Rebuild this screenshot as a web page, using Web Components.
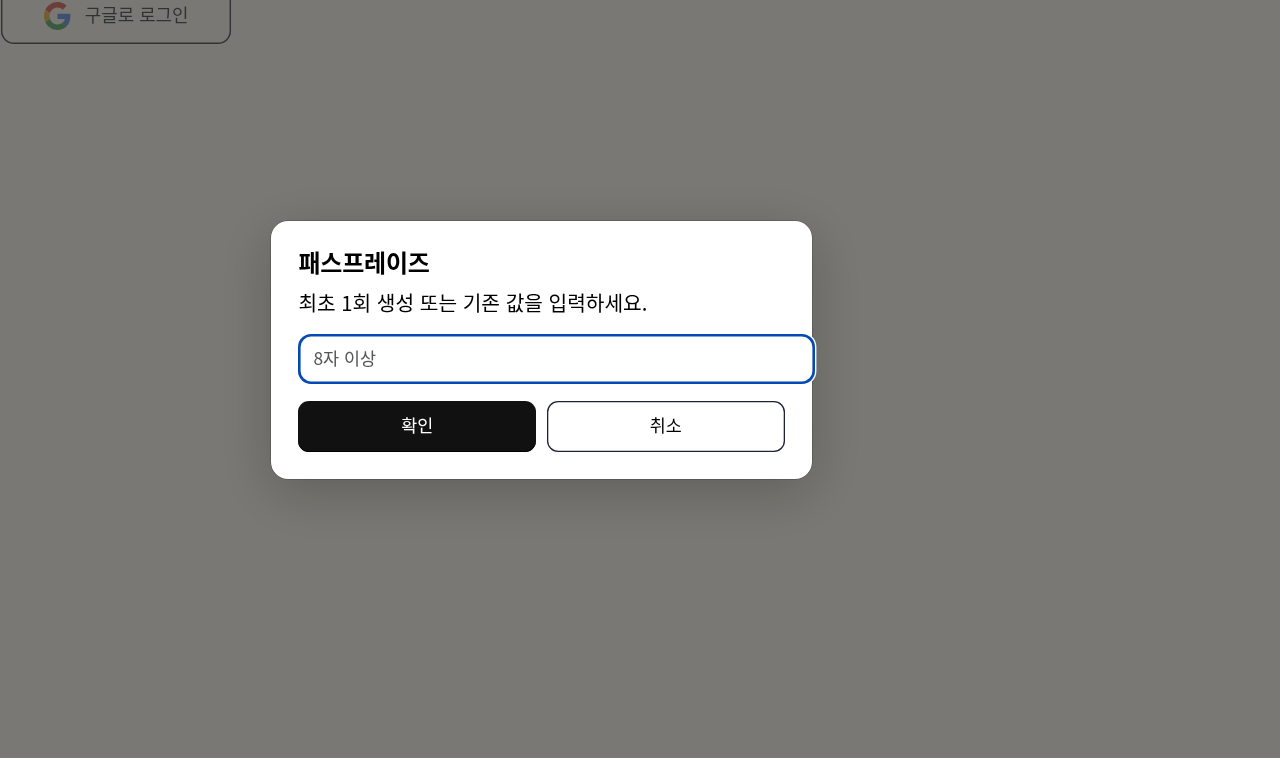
<!DOCTYPE html>
<html lang="ko">
<head>
<meta charset="utf-8">
<title>패스프레이즈</title>
<style>
  body {
    margin: 0;
    height: 100vh;
    overflow: hidden;
    background: #f4f1e8;
    color: #000;
    font-family: "Noto Sans CJK KR", sans-serif;
  }
</style>
</head>
<body>
<google-login disabled>구글로 로그인</google-login>
<passphrase-dialog>
  <span slot="title">패스프레이즈</span>
  <span slot="description">최초 1회 생성 또는 기존 값을 입력하세요.</span>
  <pass-field placeholder="8자 이상"></pass-field>
  <dialog-button slot="actions" primary>확인</dialog-button>
  <dialog-button slot="actions">취소</dialog-button>
</passphrase-dialog>

<script>
const loginTemplate = document.createElement('template')

loginTemplate.innerHTML = `
  <style>
    :host {
      display: block;
    }
    :host([disabled]) button {
      opacity: 0.65;
    }
    button {
      box-sizing: border-box;
      display: flex;
      align-items: center;
      justify-content: center;
      gap: 14px;
      width: 229.5px;
      height: 58.4px;
      margin: -14px 0 0 1.4px;
      padding: 0;
      border: 0;
      border-radius: 13px;
      background: transparent;
      box-shadow: inset 0 0 0 1.4px #111827;
      color: #111827;
      font: 17.9px/1 "Noto Sans CJK KR", sans-serif;
    }
    slot {
      display: block;
      padding-bottom: 1px;
    }
    svg {
      width: 27px;
      height: 28px;
      padding-top: 1px;
      filter: brightness(0.88);
    }
  </style>
  <button type="button">
    <svg viewBox="0 0 48 48" preserveAspectRatio="none" aria-hidden="true">
      <path fill="#EA4335" d="M24 9.5c3.54 0 6.71 1.22 9.21 3.6l6.85-6.85C35.9 2.38 30.47 0 24 0 14.62 0 6.51 5.38 2.56 13.22l7.98 6.19C12.43 13.72 17.74 9.5 24 9.5z"/>
      <path fill="#4285F4" d="M46.98 24.55c0-1.57-.15-3.09-.38-4.55H24v9.02h12.94c-.58 2.96-2.26 5.48-4.78 7.18l7.73 6c4.51-4.18 7.09-10.36 7.09-17.65z"/>
      <path fill="#FBBC05" d="M10.53 28.59c-.48-1.45-.76-2.99-.76-4.59s.27-3.14.76-4.59l-7.98-6.19C.92 16.46 0 20.12 0 24c0 3.88.92 7.54 2.56 10.78l7.97-6.19z"/>
      <path fill="#34A853" d="M24 48c6.48 0 11.93-2.13 15.89-5.81l-7.73-6c-2.15 1.45-4.92 2.3-8.16 2.3-6.26 0-11.57-4.22-13.47-9.91l-7.98 6.19C6.51 42.62 14.62 48 24 48z"/>
    </svg>
    <slot></slot>
  </button>
`

customElements.define('google-login',
  /**
   * Represents a google-login element.
   */
  class extends HTMLElement {
    constructor() {
      super()

      this.attachShadow({ mode: 'open' })
        .append(loginTemplate.content.cloneNode(true))
    }
  })

const dialogTemplate = document.createElement('template')

dialogTemplate.innerHTML = `
  <style>
    :host {
      position: fixed;
      inset: 0;
      box-sizing: border-box;
      display: flex;
      align-items: flex-start;
      padding: 220.6px 0 0 271.4px;
      background: rgba(0, 0, 0, 0.5);
    }
    section {
      box-sizing: border-box;
      width: 540.2px;
      height: 258px;
      padding: 26px 27px;
      border-radius: 17px;
      background: #fff;
      box-shadow: 0 0 0 0.5px rgba(0, 0, 0, 0.3), 0 13px 54px rgba(0, 0, 0, 0.22);
    }
    h2 {
      margin: 0;
      font-size: 24px;
      font-weight: 700;
      line-height: 30px;
      letter-spacing: -0.2px;
    }
    p {
      margin: 10px 0 16.4px;
      font-size: 20.25px;
      line-height: 31px;
    }
    .actions {
      display: grid;
      grid-template-columns: 1fr 1fr;
      gap: 11px;
      margin-top: 17px;
    }
  </style>
  <section role="dialog">
    <h2><slot name="title"></slot></h2>
    <p><slot name="description"></slot></p>
    <slot></slot>
    <div class="actions"><slot name="actions"></slot></div>
  </section>
`

customElements.define('passphrase-dialog',
  /**
   * Represents a passphrase-dialog element with its backdrop.
   */
  class extends HTMLElement {
    constructor() {
      super()

      this.attachShadow({ mode: 'open' })
        .append(dialogTemplate.content.cloneNode(true))
    }
  })

const fieldTemplate = document.createElement('template')

fieldTemplate.innerHTML = `
  <style>
    :host {
      display: block;
    }
    /* The padding is added to the full width, so the field is wider than the card's content. */
    input {
      box-sizing: content-box;
      display: block;
      width: 100%;
      height: 47px;
      margin: 0;
      padding: 0 15px 3px 15px;
      border: 0;
      border-radius: 13px;
      outline: none;
      background: #fff;
      box-shadow: inset 0 0 0 2.6px #0549b5, 0 0 0 1.4px #fff;
      font: 17.4px "Noto Sans CJK KR", sans-serif;
    }
    input::placeholder {
      color: #555;
      opacity: 1;
    }
  </style>
  <input type="text">
`

customElements.define('pass-field',
  /**
   * Represents a pass-field element.
   */
  class extends HTMLElement {
    #input

    constructor() {
      super()

      const shadow = this.attachShadow({ mode: 'open' })
      shadow.append(fieldTemplate.content.cloneNode(true))

      this.#input = shadow.querySelector('input')
    }

    connectedCallback() {
      this.#input.placeholder = this.getAttribute('placeholder') || ''
    }
  })

const buttonTemplate = document.createElement('template')

buttonTemplate.innerHTML = `
  <style>
    :host {
      display: block;
    }
    button {
      box-sizing: border-box;
      display: block;
      width: 100%;
      height: 51px;
      padding: 0 0 3px;
      border: 0;
      border-radius: 11px;
      background: #fff;
      box-shadow: inset 0 0 0 1.3px #1f2138;
      color: #000;
      font: 17.4px/1 "Noto Sans CJK KR", sans-serif;
    }
    :host([primary]) button {
      background: #111;
      color: #fff;
      box-shadow: inset 0 -1px #000;
    }
  </style>
  <button type="button"><slot></slot></button>
`

customElements.define('dialog-button',
  /**
   * Represents a dialog-button element.
   */
  class extends HTMLElement {
    constructor() {
      super()

      this.attachShadow({ mode: 'open' })
        .append(buttonTemplate.content.cloneNode(true))
    }
  })
</script>
</body>
</html>
